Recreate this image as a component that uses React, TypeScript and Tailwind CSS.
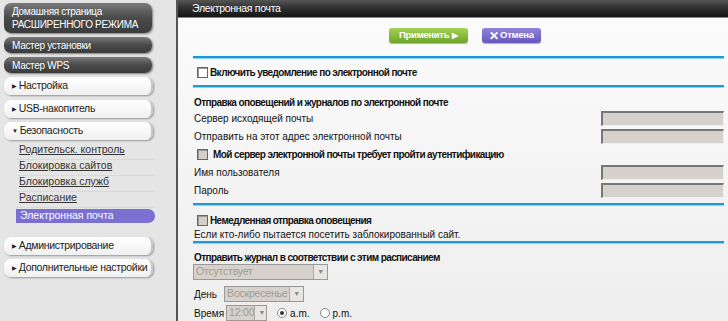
import React from "react";

const font = { fontFamily: '"Liberation Sans", Arial, sans-serif' };

function DarkItem({ children, h }: { children: React.ReactNode; h: string }) {
  return (
    <div
      className={`mx-[4px] w-[148px] ${h} rounded-[7px] bg-gradient-to-b from-[#7a7a7a] via-[#4a4a4a] to-[#3c3c3c] shadow-[1px_1px_2px_rgba(0,0,0,0.45)] px-[8px] flex flex-col justify-center whitespace-nowrap text-white text-[10px] leading-[13px] tracking-[-0.3px]`}
    >
      {children}
    </div>
  );
}

function LightItem({ label, open }: { label: string; open?: boolean }) {
  return (
    <div className="mx-[4px] w-[149px] h-[18px] rounded-[7px] bg-gradient-to-b from-white to-[#f0f0f0] shadow-[1px_1px_2px_rgba(0,0,0,0.35)] border-r-2 border-[#c8c8c8] flex items-center px-[8px] whitespace-nowrap text-[10.5px] tracking-[-0.3px] text-[#222]">
      <span className="text-[6px] mr-[2px]">{open ? "▼" : "▶"}</span>
      {label}
    </div>
  );
}

function SubItem({ label, active }: { label: string; active?: boolean }) {
  if (active)
    return (
      <div className="ml-[16px] w-[139px] h-[14px] mt-[1px] rounded-r-[7px] bg-[#7b70d2] text-white text-[10.5px] flex items-center pl-[4px]">
        {label}
      </div>
    );
  return (
    <div className="ml-[16px] w-[139px] h-[16px] border-b border-[#d8d8d8] flex items-end pb-[1px] pl-[3px] text-[10.5px] text-[#333] underline">
      {label}
    </div>
  );
}

function BlueLine() {
  return <div className="h-[2px] bg-[#1a9bd5] border-b border-[#8fd0ee] box-content" />;
}

function Field({ label }: { label: string }) {
  return (
    <div className="flex items-center justify-between h-[18px] pl-[1px]">
      <span>{label}</span>
      <div className="w-[123px] h-[15px] bg-[#d6d1ca] border-t-2 border-l-2 border-[#777] border-b border-r border-b-[#eee] border-r-[#eee]" />
    </div>
  );
}

function Check({ label, grey, gap = "gap-[2px]" }: { label: string; grey?: boolean; gap?: string }) {
  return (
    <div className={`flex items-center ${gap}`}>
      <span
        className={`w-[11px] h-[11px] border border-[#666] shadow-[inset_1px_1px_0_#999] ${grey ? "bg-[#d4d0c8]" : "bg-white"}`}
      />
      <span className="font-bold tracking-[-0.6px]">{label}</span>
    </div>
  );
}

function Select({ value, w }: { value: string; w: string }) {
  return (
    <div className={`${w} h-[16px] bg-[#d6d1ca] border border-[#999] flex items-center justify-between text-[#a09c96] text-[10.5px] tracking-[-0.2px] pl-[2px] whitespace-nowrap overflow-hidden`}>
      <span>{value}</span>
      <span className="w-[14px] h-[14px] shrink-0 bg-[#e8e6e2] border-l border-[#aaa] flex items-center justify-center text-[7px] text-[#888]">▼</span>
    </div>
  );
}

export default function App() {
  return (
    <div className="flex w-[728px] h-[321px] overflow-hidden text-[10px] text-[#111]" style={font}>
      <div className="w-[176px] shrink-0 bg-[#e5e5e5] pt-[3px] flex flex-col">
        <DarkItem h="h-[30px]">
          <span>Домашняя страница</span>
          <span>РАСШИРЕННОГО РЕЖИМА</span>
        </DarkItem>
        <div className="h-[4px]" />
        <DarkItem h="h-[16px]">Мастер установки</DarkItem>
        <div className="h-[4px]" />
        <DarkItem h="h-[16px]">Мастер WPS</DarkItem>
        <div className="h-[4px]" />
        <LightItem label="Настройка" />
        <div className="h-[5px]" />
        <LightItem label="USB-накопитель" />
        <div className="h-[4px]" />
        <LightItem label="Безопасность" open />
        <div className="h-[4px]" />
        <SubItem label="Родительск. контроль" />
        <SubItem label="Блокировка сайтов" />
        <SubItem label="Блокировка служб" />
        <SubItem label="Расписание" />
        <SubItem label="Электронная почта" active />
        <div className="h-[14px]" />
        <LightItem label="Администрирование" />
        <div className="h-[4px]" />
        <LightItem label="Дополнительные настройки" />
      </div>
      <div className="w-[2px] bg-[#555]" />
      <div className="flex-1 flex flex-col bg-gradient-to-b from-[#fcfcfc] to-[#eeeeee]">
        <div className="h-[19px] bg-gradient-to-b from-[#555] via-[#2e2e2e] to-[#151515] text-white text-[10.5px] tracking-[-0.3px] flex items-center pl-[14px] border-b border-[#888]">
          Электронная почта
        </div>
        <div className="pl-[15px] pr-[4px] flex flex-col">
          <div className="flex h-[15px] mt-[10px] pl-[196px] gap-[14px]">
            <div className="w-[79px] rounded-[3px] bg-gradient-to-b from-[#a3d155] to-[#6ea52a] text-white font-bold text-[9.5px] tracking-[-0.3px] flex items-center justify-center shadow-[0_1px_1px_rgba(0,0,0,0.3)]">
              Применить <span className="text-[8px] ml-[3px]">▶</span>
            </div>
            <div className="w-[59px] rounded-[3px] bg-gradient-to-b from-[#9084da] to-[#6657bd] text-white font-bold text-[9.5px] tracking-[-0.3px] flex items-center justify-center shadow-[0_1px_1px_rgba(0,0,0,0.3)]">
              <span className="text-[12px] mr-[1px]">✕</span>Отмена
            </div>
          </div>
          <div className="h-[13px]" />
          <BlueLine />
          <div className="h-[26px] flex items-center pl-[4px]">
            <Check label="Включить уведомление по электронной почте" />
          </div>
          <BlueLine />
          <div className="h-[7px]" />
          <div className="font-bold tracking-[-0.6px] h-[14px] pl-[1px]">Отправка оповещений и журналов по электронной почте</div>
          <Field label="Сервер исходящей почты" />
          <Field label="Отправить на этот адрес электронной почты" />
          <div className="h-[18px] flex items-center pl-[4px]">
            <Check grey gap="gap-[5px]" label="Мой сервер электронной почты требует пройти аутентификацию" />
          </div>
          <Field label="Имя пользователя" />
          <Field label="Пароль" />
          <div className="h-[4px]" />
          <BlueLine />
          <div className="h-[7px]" />
          <div className="pl-[4px] h-[14px] flex items-center">
            <Check grey label="Немедленная отправка оповещения" />
          </div>
          <div className="h-[14px] flex items-center pl-[1px]">Если кто-либо пытается посетить заблокированный сайт.</div>
          <BlueLine />
          <div className="h-[6px]" />
          <div className="font-bold tracking-[-0.6px] h-[14px] pl-[1px]">Отправить журнал в соответствии с этим расписанием</div>
          <Select value="Отсутствует" w="w-[135px]" />
          <div className="h-[6px]" />
          <div className="flex items-center gap-[7px] pl-[1px]">
            <span>День</span>
            <Select value="Воскресенье" w="w-[80px]" />
          </div>
          <div className="h-[3px]" />
          <div className="flex items-center gap-[2px] pl-[1px]">
            <span>Время</span>
            <Select value="12:00" w="w-[41px]" />
            <span className="ml-[8px] w-[10px] h-[10px] rounded-full border border-[#888] bg-white flex items-center justify-center">
              <span className="w-[4px] h-[4px] rounded-full bg-[#333]" />
            </span>
            <span className="ml-[1px]">a.m.</span>
            <span className="ml-[8px] w-[10px] h-[10px] rounded-full border border-[#888] bg-white" />
            <span className="ml-[1px]">p.m.</span>
          </div>
        </div>
      </div>
    </div>
  );
}
